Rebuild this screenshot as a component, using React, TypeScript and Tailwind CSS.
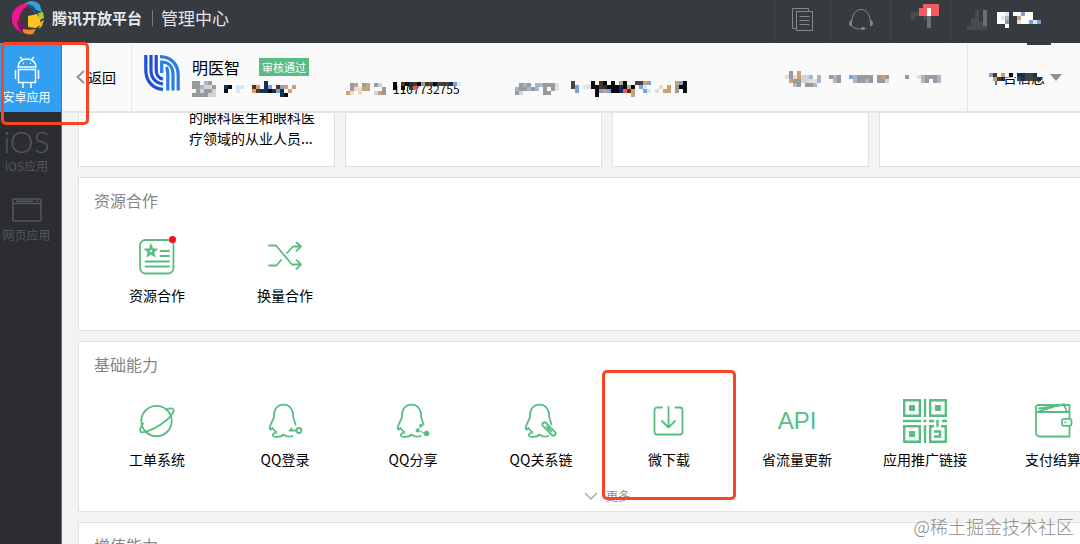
import type { ReactNode } from "react";
import clsx from "clsx";

const palette: Record<string, string> = {
  k: "#0b0b0d",
  d: "#404347",
  g: "#999a9e",
  l: "#d3d4d8",
  b: "#a9b5cc",
  t: "#c9a27a",
  w: "#ecdccd",
  n: "#12305a",
  s: "#7da0d8",
  c: "#d3e9f6",
  m: "#5b3512",
  r: "#f25c5f",
  p: "#ffffff",
  o: "#6a6e72",
  u: "#484c50",
  f: "#fafafa",
};

// Obscured values are drawn as blocks of 4x4 cells
const Mosaic = ({ rows, className }: { rows: string[]; className?: string }) => {
  const cols = Math.max(...rows.map((row) => row.length));

  return (
    <svg
      aria-hidden="true"
      width={cols * 4}
      height={rows.length * 4}
      shapeRendering="crispEdges"
      className={clsx("shrink-0", className)}
    >
      {rows.map((row, y) =>
        row.split("").map((cell, x) =>
          palette[cell] ? (
            <rect key={`${x}-${y}`} x={x * 4} y={y * 4} width={4} height={4} fill={palette[cell]} />
          ) : null,
        ),
      )}
    </svg>
  );
};

const Logo = () => (
  <svg width="34" height="35" viewBox="0 0 34 35" aria-hidden="true">
    <path d="M15 3C7 4 0 10 0 18c0 7 4 13 11 15-4-4-5-9-4-14 1-6 4-11 9-13z" fill="#f0168f" />
    <path d="M15 3C7 4 0 10 0 18c0 2 .5 4 1 6 4-1 6-3 6-7 1-5 4-9 8-11z" fill="#f0168f" />
    <path d="M5 20c0 6 2 11 6 13l3-2c-2-3-2-6 0-8-4 1-7 0-9-3z" fill="#7c1560" />
    <path d="M13 4C16 0 24 0 28 5l2 7-6-2c-2-4-6-6-11-6z" fill="#2f9fe0" />
    <path d="M13 4c5 1 9 3 11 7l2 4-4-1c-1-4-4-8-9-10z" fill="#1b4f98" />
    <path d="M26 13l5-1 1 6-4 2z" fill="#a5cf2f" />
    <path d="M16 16l9-2 3 4v7l-4 3-8-1z" fill="#fdc221" />
    <path d="M28 22l4-2-2 6-3 3z" fill="#e2b51c" />
    <path d="M11 29c4 1 8 1 13 0l-3 5c-4 1-8 0-10-2z" fill="#f5891f" />
  </svg>
);

const AppLogo = () => (
  <svg width="36" height="36" viewBox="0 0 36 36" fill="none" strokeWidth="3.2" aria-hidden="true">
    <g stroke="#1f4fd8">
      <path d="M1.800 0v15c0 11 7 19 17.200 19.300" />
      <path d="M7 0v15c0 8 5 13.500 12 14" />
      <path d="M12.200 0v15c0 5 3 8.500 6.800 9" />
    </g>
    <g stroke="#2a7bea">
      <path d="M16 1.700C27 2 34.200 9 34.200 20v15.500" />
      <path d="M17.700 18V7c7 0 11.300 5 11.300 13v15.500" />
      <path d="M22.500 12c1 2 1.300 5 1.300 8v15.500" />
    </g>
  </svg>
);

const AndroidIcon = () => (
  <svg width="26" height="33" viewBox="0 0 26 33" fill="none" stroke="currentColor" strokeWidth="1.500" aria-hidden="true">
    <path d="M4 11c0-5 4-8 9-8s9 3 9 8zM6 1l3 3M20 1l-3 3" />
    <path d="M4.500 13.500h17v13h-17zM1.500 14v9M24.500 14v9M9 27v5M17 27v5" />
    <path d="M9 7.500h1M16 7.500h1" />
  </svg>
);

const WebIcon = () => (
  <svg width="30" height="24" viewBox="0 0 30 24" fill="none" stroke="currentColor" strokeWidth="1.500" aria-hidden="true">
    <rect x="1" y="1" width="28" height="22" rx="1" />
    <path d="M1 5.500h28M4 3.200h17M24 3.200h2" />
  </svg>
);

const Icon = ({ children, size = 36 }: { children: ReactNode; size?: number }) => (
  <svg
    width={size}
    height={size}
    viewBox={`0 0 ${size} ${size}`}
    fill="none"
    stroke="currentColor"
    strokeWidth="1.800"
    strokeLinecap="round"
    strokeLinejoin="round"
    className="overflow-visible"
    aria-hidden="true"
  >
    {children}
  </svg>
);

const ResourceIcon = () => (
  <Icon>
    <rect x="1" y="1" width="33.500" height="33.500" rx="5.500" />
    <path d="M12 5l1.900 4.700 5 .3-3.900 3.200 1.300 4.900-4.300-2.700L7.700 18.100 9 13.200 5.100 10l5-.3z" fill="currentColor" strokeWidth=".6" />
    <circle cx="12" cy="12" r="1.200" fill="white" stroke="none" />
    <path d="M21.500 12H30M21.500 17H30M6.500 22.500H30M6.500 27.500H30" />
  </Icon>
);

const ShuffleIcon = () => (
  <Icon>
    <path d="M2 6.500h7L25 25.500h9M2 26.500h7.500l4.500-5.500M20 14l6-6.500h8M29.500 3.500L34 7.500l-4.500 4.300M29.500 21.200l4.500 4.300-4.500 4.300" />
  </Icon>
);

const PlanetIcon = () => (
  <Icon>
    <circle cx="17.500" cy="18" r="15.200" />
    <path d="M27 6.500c4-1.500 7-1.500 7.500 0 1 3-4 9-12 14.500S4 30.500 2 29c-1.500-1.500-.500-5 2-8.500" />
  </Icon>
);

const Penguin = ({ children }: { children: ReactNode }) => (
  <Icon>
    <path d="M28.500 21.500c-.6-3-1.900-5-2.200-7.500C26.500 7 23 1.700 16.500 1.700S6.500 7 7 14C5.700 18 3.200 21 2.700 25c-.2 1.800.8 2 1.800.8.600-.7 1-1 1.500-.3.700 2 2 3 3.500 3.800-2.500.5-4.500 2-3.200 3.900 2.700 1.300 7.700.8 10.200-1.700 2.500 2 6 2.500 9 1.500" />
    {children}
  </Icon>
);

const LoginIcon = () => (
  <Penguin>
    <circle cx="32" cy="27.500" r="2.500" />
    <path d="M22.500 27.500h7M24.500 27.500v-2" />
  </Penguin>
);

const ShareIcon = () => (
  <Penguin>
    <path d="M26 22.500l-3.500 5 9 3" strokeWidth="1" />
    <circle cx="26" cy="22.500" r="1.700" fill="currentColor" stroke="none" />
    <circle cx="22.500" cy="27.500" r="1.900" fill="currentColor" stroke="none" />
    <circle cx="31.500" cy="30.500" r="2.800" fill="currentColor" stroke="none" />
  </Penguin>
);

const RelationIcon = () => (
  <Penguin>
    <g transform="rotate(45 26 26)">
      <rect x="17.500" y="23.800" width="9" height="4.400" rx="2.200" fill="white" />
      <rect x="25.500" y="23.800" width="9" height="4.400" rx="2.200" fill="white" />
      <path d="M22.500 26h7" />
    </g>
  </Penguin>
);

const DownloadIcon = () => (
  <Icon>
    <path d="M11 4.500H6A2.500 2.500 0 0 0 3.500 7v22A2.500 2.500 0 0 0 6 31.500h23a2.500 2.500 0 0 0 2.500-2.500V7A2.500 2.500 0 0 0 29 4.500h-4.500M17.500 4v20.500M11 18l6.500 6.500L24 18" />
  </Icon>
);

const QrIcon = () => (
  <svg width="44" height="44" viewBox="0 0 44 44" fill="none" stroke="currentColor" strokeWidth="2.400" aria-hidden="true">
    <path d="M1.200 1.200h15.600v15.600H1.200zM27.200 1.200h15.600v15.600H27.200zM1.200 27.200h15.600v15.600H1.200z" />
    <path d="M6 6h6v6H6zM32 6h6v6h-6zM6 32h6v6H6z" fill="currentColor" stroke="none" />
    <path d="M22 0v18M22 26v18M0 22h18M20.500 22h3M26 22h5M39 22h5M34.500 21v7" />
    <path d="M31 27.200h-3.800v15.600h15.600V27.200H38M31 32.500h6v5h-6" />
  </svg>
);

const WalletIcon = () => (
  <Icon>
    <path d="M34.500 15.500V9H1v21a3.500 3.500 0 0 0 3.500 3.500h30V23" />
    <path d="M1 9V4.500A2.500 2.500 0 0 1 3.500 2h31v7M4.500 8L29 1l2.500 7M4 5.500L25 2.500" />
    <rect x="27" y="15.800" width="9.500" height="7" rx="2" fill="white" />
    <path d="M30 19.300h.5" />
  </Icon>
);

const ApiIcon = () => (
  <span className="font-['Liberation_Sans',sans-serif] text-2xl leading-6">API</span>
);

const sideItems = [
  { label: "安卓应用", icon: <AndroidIcon />, active: true },
  {
    label: "iOS应用",
    icon: <span className="font-[Lato,sans-serif] text-3xl font-light leading-7">iOS</span>,
  },
  { label: "网页应用", icon: <WebIcon /> },
];

type Tool = { label: string; icon: ReactNode; dot?: boolean; marked?: boolean };

const resourceTools: Tool[] = [
  { label: "资源合作", icon: <ResourceIcon />, dot: true },
  { label: "换量合作", icon: <ShuffleIcon /> },
];

const basicTools: Tool[] = [
  { label: "工单系统", icon: <PlanetIcon /> },
  { label: "QQ登录", icon: <LoginIcon /> },
  { label: "QQ分享", icon: <ShareIcon /> },
  { label: "QQ关系链", icon: <RelationIcon /> },
  { label: "微下载", icon: <DownloadIcon />, marked: true },
  { label: "省流量更新", icon: <ApiIcon /> },
  { label: "应用推广链接", icon: <QrIcon /> },
  { label: "支付结算", icon: <WalletIcon /> },
];

const Header = () => (
  <header className="flex h-[43px] shrink-0 bg-[#363b40] text-white">
    <div className="flex items-center pb-2 pl-3">
      <Logo />
      <span className="ml-1.5 text-[15px] font-bold leading-6 text-[#e8e9ea]">腾讯开放平台</span>
      <span className="ml-2.5 h-4 w-px bg-[#74787c]" />
      <h1 className="ml-2 text-[17px] leading-6 text-[#e4e5e6]">管理中心</h1>
    </div>

    <nav className="ml-auto flex text-[#85888b]">
      <button type="button" aria-label="文档" className="flex w-14 justify-center border-l border-[#41464b] pt-2">
        <svg width="22" height="24" viewBox="0 0 22 24" fill="none" stroke="currentColor" aria-hidden="true">
          <path d="M4 20.500H.500V.500h16V3" />
          <rect x="4.500" y="3.500" width="16" height="19" />
          <path d="M7.500 8.500h10M7.500 12.500h10M7.500 16.500h10" />
        </svg>
      </button>
      <button type="button" aria-label="客服" className="flex w-[60px] justify-center border-l border-[#41464b] pt-2">
        <svg width="24" height="23" viewBox="0 0 24 23" fill="none" stroke="currentColor" aria-hidden="true">
          <path d="M3 13C3 6 7 1.500 12 1.500S21 6 21 13M3 18c1 2 4 3 8 3" />
          <path d="M2.500 12.500v5.500C1.500 18 .5 17 .5 15.300s1-2.800 2-2.800zM21.500 12.500v5.500c1 0 2-1 2-2.700s-1-2.800-2-2.800z" fill="currentColor" />
          <ellipse cx="14" cy="20.500" rx="2" ry="1" fill="currentColor" />
        </svg>
      </button>
      <button type="button" aria-label="消息" className="flex w-[60px] justify-center border-l border-[#41464b] pl-2 pt-1">
        <Mosaic rows={["...rrrr", "..rrprr", "uurrprr", "u..uo..", "....o..", "....o.."]} />
      </button>
      <button type="button" aria-label="账号" className="relative flex w-[130px] items-start border-l border-[#41464b] pl-4 pt-2.5">
        <Mosaic rows={["..u.o", "..u.o", ".uu.o", ".uuuo", "uuuuu"]} />
        <Mosaic className="ml-2.5 mt-0.5" rows={["ppc.ppspp", "pcb..tppp", "ppg..wppscs", "..p......."]} />
        <span className="absolute left-[76px] top-[43px] z-10 h-0.5 w-6 bg-[#363b40]" />
      </button>
    </nav>
  </header>
);

const Sidebar = () => (
  <nav className="w-[62px] shrink-0 border-r border-[#6d6f72] bg-[#2b2d31]">
    {sideItems.map((item) => (
      <a
        key={item.label}
        href="#"
        className={clsx(
          "flex h-[69px] flex-col items-center pr-2 pt-[13px]",
          item.active ? "bg-[#339ff0] text-white" : "text-[#55585d]",
        )}
      >
        <span className="flex h-8 items-center">{item.icon}</span>
        <span className="mt-px whitespace-nowrap text-xs leading-4">{item.label}</span>
      </a>
    ))}
  </nav>
);

const AppBar = () => (
  <div className="flex h-[70px] shrink-0 border-b-2 border-[#e5e5e5] bg-[#fafafa]">
    <button type="button" className="flex w-[70px] shrink-0 items-center border-r border-[#e8e8e8] pl-3.5 text-sm">
      <svg width="9" height="14" viewBox="0 0 9 14" fill="none" stroke="#8d8f91" strokeWidth="1.800" aria-hidden="true">
        <path d="M8 1L1.500 7 8 13" />
      </svg>
      <span className="ml-[3px]">返回</span>
    </button>

    <div className="flex pl-3 pt-3">
      <AppLogo />
      <div className="ml-3">
        <div className="flex items-center pt-0.5">
          <h2 className="text-base leading-5">明医智</h2>
          <span className="ml-[19px] bg-[#58bd83] px-[3px] text-[11px] leading-[18px] text-white">审核通过</span>
        </div>
        <div className="mt-1 flex h-4 items-center text-xs leading-4">
          <div className="flex w-[154px]">
            <Mosaic rows={["gg.bg.", "ggbllg", ".glggl", "ggggll"]} />
            <Mosaic className="ml-2" rows={["..........n", "nk.cc..mt.ns.mst.t", "k..c...tmnnknsn.t", "..............nk"]} />
          </div>
          <div className="flex w-[169px] items-center">
            <Mosaic rows={[".gt.gt.gl.", ".gwwtt...g", "tw.w...ltg"]} />
            <div className="relative ml-[7px]">
              <span>1107732755</span>
              <Mosaic className="absolute left-0 top-px" rows={["k.mknmkgmdkdmdnsc", "k.k.mr..........."]} />
            </div>
          </div>
          <div className="flex items-center">
            <Mosaic rows={[".gbg.bbgggw", "bggbgb.g.gc", "gl.....gg.."]} />
            <Mosaic className="ml-3" rows={["d....k.mk.k.tk..ddts......tsk", "ds.cwkkmnkkknktk.sc...w.t.gkk", ".s....kstskknrmt..sc.w.tt.g.k", "......k........t............."]} />
          </div>
        </div>
      </div>
    </div>

    <div className="ml-auto flex w-[182px] shrink-0 items-center pt-1">
      <Mosaic
        rows={[
          ".g.t",
          "wgwtllb.b..gbg..sbgggg.gtg....g..wbgggb",
          ".tggllwcb...bg...bggbg.ggl........bg.gb",
          "..bg.ggb",
        ]}
      />
    </div>
    <button type="button" className="flex w-[113px] shrink-0 items-center border-l border-[#e5e5e5] pl-[21px] text-sm">
      <span className="relative">
        平台信息
        <Mosaic className="absolute left-0 top-0.5" rows={["ffffffffffffff", "smftfkfnnddnff", "ftmn...dnddmn."]} />
      </span>
      <svg width="12" height="7" viewBox="0 0 12 7" className="ml-[5px]" aria-hidden="true">
        <path d="M0 0h12L6 7z" fill="#8e8e8e" />
      </svg>
    </button>
  </div>
);

const ToolItem = ({ tool }: { tool: Tool }) => (
  <a href="#" className="relative flex w-32 shrink-0 flex-col items-center">
    <span className="relative flex h-11 items-center text-[#58bd83]">
      {tool.icon}
      {tool.dot && <span className="absolute -right-px top-px size-[7px] rounded-full bg-[#fb0b1b]" />}
    </span>
    <span className="mt-1.5 whitespace-nowrap text-sm leading-5">{tool.label}</span>
    {tool.marked && (
      <span className="absolute -left-[3px] -top-[29px] z-10 h-[130px] w-[134px] rounded-[5px] border-[3px] border-[#fb4423]" />
    )}
  </a>
);

const Section = ({ title, tools, more }: { title: string; tools: Tool[]; more?: boolean }) => (
  <section className="mt-2.5 border border-[#e2e2e2] bg-white pt-2.5">
    <h3 className="pl-[15px] text-base leading-6 text-[#858585]">{title}</h3>
    <div className="mt-[23px] flex pl-3.5">
      {tools.map((tool) => (
        <ToolItem key={tool.label} tool={tool} />
      ))}
    </div>
    {more ? (
      <button type="button" className="mx-auto mb-[5px] mt-[17px] flex h-5 items-center gap-2 text-xs text-[#8c8c8c]">
        <svg width="14" height="8" viewBox="0 0 14 8" fill="none" stroke="#b0b0b0" strokeWidth="1.600" aria-hidden="true">
          <path d="M1 1l6 6 6-6" />
        </svg>
        更多
      </button>
    ) : (
      <div className="h-[25px]" />
    )}
  </section>
);

export default function App() {
  return (
    <div className="relative flex h-screen flex-col overflow-hidden bg-[#f3f3f3] font-['Noto_Sans_CJK_SC',sans-serif] text-black">
      <Header />

      <div className="flex min-h-0 flex-1">
        <Sidebar />

        <div className="flex min-w-0 flex-1 flex-col">
          <AppBar />

          <main className="min-h-0 flex-1 overflow-hidden pl-4">
            <div className="min-w-[1058px]">
              {/* Cards scrolled under the app bar */}
              <div className="grid grid-cols-4 gap-2.5">
                {["的眼科医生和眼科医疗领域的从业人员...", "", "", ""].map((text, index) => (
                  <div
                    key={index}
                    className="flex h-[54px] flex-col justify-end overflow-hidden border border-t-0 border-[#e2e2e2] bg-white pb-[17px] pl-[110px]"
                  >
                    <p className="w-[130px] text-sm leading-[21px]">{text}</p>
                  </div>
                ))}
              </div>

              <Section title="资源合作" tools={resourceTools} />
              <Section title="基础能力" tools={basicTools} more />
              <Section title="增值能力" tools={[]} />
            </div>
          </main>
        </div>
      </div>

      {/* Highlight around the android tab */}
      <span className="absolute left-px top-[42px] z-20 h-[83px] w-[88px] rounded-[5px] border-[3px] border-[#fb4423]" />

      <span className="absolute bottom-1.5 right-1.5 z-20 text-lg font-light leading-6 text-[#8b8b8b]">
        @稀土掘金技术社区
      </span>
    </div>
  );
}
